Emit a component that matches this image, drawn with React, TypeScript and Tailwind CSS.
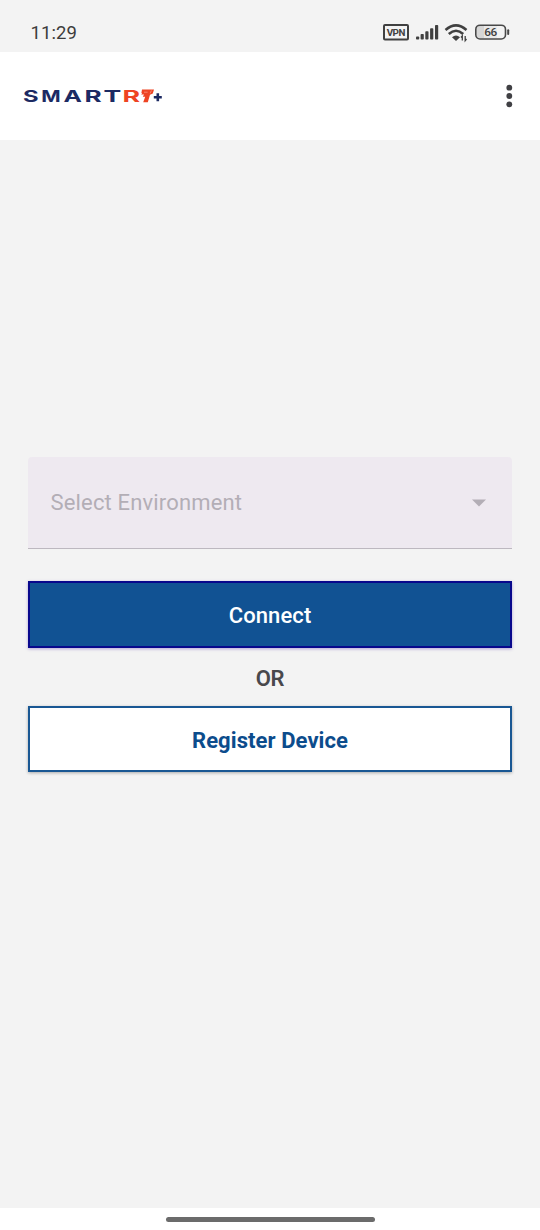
const letters = [
  { ch: 'S', x: 23, w: 15.6, fill: '#1c2a63' },
  { ch: 'M', x: 41.3, w: 19.4, fill: '#1c2a63' },
  { ch: 'A', x: 63.6, w: 18.4, fill: '#1c2a63' },
  { ch: 'R', x: 84.6, w: 17.2, fill: '#1c2a63' },
  { ch: 'T', x: 103.6, w: 17.8, fill: '#1c2a63' },
  { ch: 'R', x: 122.6, w: 17.6, fill: '#ee4423' },
];

function Logo() {
  return (
    <svg width="144" height="24" viewBox="22 84 144 24" aria-label="SMARTR7+">
      <text y="102" fontFamily="Inter, sans-serif" fontWeight="700" fontSize="16.6">
        {letters.map((l, i) => (
          <tspan key={i} x={l.x} textLength={l.w} lengthAdjust="spacingAndGlyphs" fill={l.fill}>
            {l.ch}
          </tspan>
        ))}
      </text>
      <path d="M142 89.6h12l-1.2 4-2.8 1.2-2.2 7.4h-4.6l2-5.4h-2.4l1.2-2.2h-2.8l1-1.6h-.8z" fill="#ee4423" />
      <path d="M144 92.2h3.6M151.4 90.4l-1.2 3" stroke="#fff" strokeWidth=".35" />
      <path d="M157.8 93.3v8M153.8 97.3h8" stroke="#1c2a63" strokeWidth="2.6" />
    </svg>
  );
}

function StatusIcons() {
  return (
    <svg width="130" height="24" viewBox="382 20 130 24">
      <rect x="384" y="24.9" width="24" height="14.6" rx="1" fill="none" stroke="#404040" strokeWidth="2" />
      <text x="386.7" y="35.7" fontFamily="Roboto, sans-serif" fontWeight="700" fontSize="9.8" textLength="18.6" fill="#404040">VPN</text>
      <g fill="#404040">
        <rect x="416" y="36.5" width="3.2" height="3" rx=".8" />
        <rect x="420.6" y="34" width="3.2" height="5.5" rx=".8" />
        <rect x="425.3" y="31.3" width="3.2" height="8.2" rx=".8" />
        <rect x="430.1" y="28.3" width="3.2" height="11.2" rx=".8" />
        <rect x="435" y="25" width="3.2" height="14.5" rx=".8" />
      </g>
      <g fill="none" stroke="#404040" strokeWidth="2.5">
        <path d="M445.5 30Q456 20.8 466.5 30" />
        <path d="M448.8 34Q456 27.4 463.2 34" />
      </g>
      <path d="M452 37.2Q456 33.8 460 37.2L456 41z" fill="#404040" />
      <path d="M462.3 40.5v-4.6l-1.3 1.6M465.2 36v4.6l1.3-1.6" fill="none" stroke="#404040" strokeWidth="1.3" />
      <path d="M480 26h4v12h-4q-3.5 0-3.5-4v-4q0-4 3.5-4z" fill="#d6d6d6" />
      <path d="M484 26h13v12h-13z" fill="#e9e9e9" />
      <rect x="475.8" y="25.2" width="29.7" height="13.8" rx="4.2" fill="none" stroke="#484848" strokeWidth="1.6" />
      <path d="M508.2 30.2v3.8" stroke="#484848" strokeWidth="2" strokeLinecap="round" />
      <text x="484.3" y="36.4" fontFamily="Roboto, sans-serif" fontWeight="500" fontSize="11.8" textLength="12.8" fill="#404040">66</text>
    </svg>
  );
}

export default function App() {
  return (
    <div className="flex h-[1230px] w-[540px] flex-col bg-[#f3f3f3] font-['Roboto',sans-serif]">
      <div className="flex h-[52px] shrink-0 items-center justify-between pt-3 pr-7 pl-[30.5px]">
        <span className="pt-px text-[18.5px] leading-6 tracking-[0.1px] text-[#3c3c3c]">11:29</span>
        <StatusIcons />
      </div>
      <header className="flex h-22 shrink-0 items-center justify-between bg-white pr-6 pl-[22px]">
        <Logo />
        <svg width="14" height="24" viewBox="0 0 14 24" fill="#404044">
          <circle cx="7.3" cy="3.7" r="2.9" />
          <circle cx="7.3" cy="12" r="2.9" />
          <circle cx="7.3" cy="20.3" r="2.9" />
        </svg>
      </header>
      <main className="flex flex-1 flex-col px-7 pt-[317px]">
        <div className="flex h-[92px] w-[483.5px] items-center justify-between rounded-t-[4px] border-b border-[#bdb8c0] bg-[#eee9f0] pr-[26px] pl-[22.5px]">
          <span className="text-[22px] leading-7 tracking-[0.16px] text-[#b3aeb6]">Select Environment</span>
          <svg width="14" height="8" viewBox="0 0 14 8">
            <path d="M0 0.4h14l-7 7z" fill="#b3aeb6" />
          </svg>
        </div>
        <button className="mt-8 h-[67px] w-[484px] border-2 border-[#08088c] bg-[#115293] pt-0.5 text-[22px] font-medium tracking-[0.1px] text-white shadow-[0_1px_3px_rgba(60,20,160,0.35)]">
          Connect
        </button>
        <div className="flex h-[58px] items-center justify-center pt-[3px] text-[22px] font-semibold tracking-[-0.2px] text-[#48484c]">OR</div>
        <button className="h-[66px] w-[484px] border-2 border-[#195793] bg-white pt-[3px] text-[22px] font-bold tracking-[0.08px] text-[#0c4c8c] shadow-[0_1px_3px_rgba(0,0,0,0.3)]">
          Register Device
        </button>
      </main>
      <div className="flex h-[22px] shrink-0 items-center justify-center bg-white">
        <div className="h-[5px] w-[209px] rounded-full bg-[#6b6b6b]" />
      </div>
    </div>
  );
}
